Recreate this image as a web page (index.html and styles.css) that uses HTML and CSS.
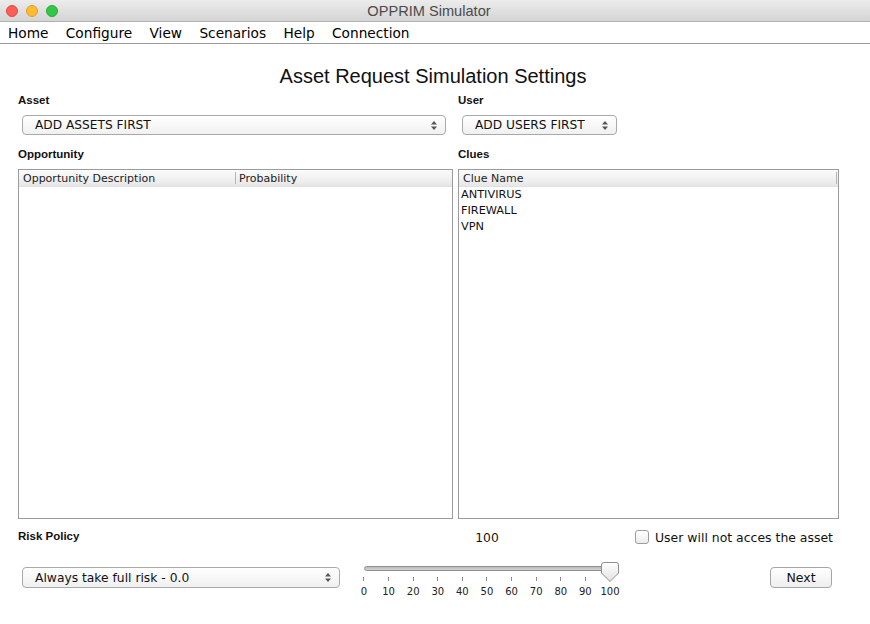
FILE: index.html
```html
<!DOCTYPE html>
<html>
<head>
<meta charset="utf-8">
<title>OPPRIM Simulator</title>
<link rel="stylesheet" href="styles.css">
</head>
<body>
<div class="window">
  <header class="titlebar">
    <div class="lights">
      <span class="light red"></span>
      <span class="light yellow"></span>
      <span class="light green"></span>
    </div>
    <div class="title">OPPRIM Simulator</div>
    <div></div>
  </header>
  <nav class="menubar">
    <span>Home</span>
    <span>Configure</span>
    <span>View</span>
    <span>Scenarios</span>
    <span>Help</span>
    <span>Connection</span>
  </nav>
  <main class="content">
    <h1 class="heading">Asset Request Simulation Settings</h1>
    <div class="columns">
      <section class="col">
        <div class="label">Asset</div>
        <div class="combo combo-asset">
          <span class="combo-text">ADD ASSETS FIRST</span>
          <svg class="arrows" width="6" height="9" viewBox="0 0 6 9"><path d="M3 0 L6 3.5 L0 3.5 Z M0 5.5 L6 5.5 L3 9 Z" fill="#555"/></svg>
        </div>
        <div class="label label-gap">Opportunity</div>
        <div class="table">
          <div class="thead">
            <div class="th th-desc">Opportunity Description</div>
            <div class="th-sep"></div>
            <div class="th th-prob">Probability</div>
          </div>
        </div>
      </section>
      <section class="col">
        <div class="label">User</div>
        <div class="combo combo-user">
          <span class="combo-text">ADD USERS FIRST</span>
          <svg class="arrows" width="6" height="9" viewBox="0 0 6 9"><path d="M3 0 L6 3.5 L0 3.5 Z M0 5.5 L6 5.5 L3 9 Z" fill="#555"/></svg>
        </div>
        <div class="label label-gap">Clues</div>
        <div class="table">
          <div class="thead">
            <div class="th th-clue">Clue Name</div>
            <div class="th-sep"></div>
          </div>
          <div class="row">ANTIVIRUS</div>
          <div class="row">FIREWALL</div>
          <div class="row">VPN</div>
        </div>
      </section>
    </div>
    <div class="bottom">
      <div class="label risk-label">Risk Policy</div>
      <div class="value">100</div>
      <label class="check">
        <span class="checkbox"></span>
        <span class="check-text">User will not acces the asset</span>
      </label>

      <div class="combo combo-risk">
        <span class="combo-text">Always take full risk - 0.0</span>
        <svg class="arrows" width="6" height="9" viewBox="0 0 6 9"><path d="M3 0 L6 3.5 L0 3.5 Z M0 5.5 L6 5.5 L3 9 Z" fill="#555"/></svg>
      </div>
      <div class="slider">
        <div class="track-wrap">
          <div class="track"></div>
          <svg class="thumb" width="18" height="20" viewBox="0 0 18 20">
            <defs>
              <linearGradient id="tg" x1="0" y1="0" x2="0" y2="1">
                <stop offset="0" stop-color="#ffffff"/>
                <stop offset="1" stop-color="#e2e2e2"/>
              </linearGradient>
            </defs>
            <path d="M3 0.5 H15 Q17.5 0.5 17.5 3 V11 L9 19.5 L0.5 11 V3 Q0.5 0.5 3 0.5 Z" fill="url(#tg)" stroke="#8e8e8e" stroke-width="1"/>
          </svg>
        </div>
        <div class="ticks">
          <span></span><span></span><span></span><span></span><span></span><span></span><span></span><span></span><span></span><span></span><span></span>
        </div>
        <div class="scale">
          <span>0</span><span>10</span><span>20</span><span>30</span><span>40</span><span>50</span><span>60</span><span>70</span><span>80</span><span>90</span><span>100</span>
        </div>
      </div>
      <button class="btn">Next</button>
    </div>
  </main>
</div>
</body>
</html>
```

FILE: styles.css
```css
* { box-sizing: border-box; }

html, body {
  margin: 0;
  padding: 0;
}

body {
  width: 870px;
  height: 624px;
  overflow: hidden;
  background: #ffffff;
  font-family: "DejaVu Sans", sans-serif;
  color: #000;
}

.window {
  width: 870px;
  height: 624px;
}

/* Title bar */
.titlebar {
  height: 22px;
  display: grid;
  grid-template-columns: 1fr auto 1fr;
  align-items: center;
  background: linear-gradient(#ececec, #d4d4d4);
  border-bottom: 1px solid #b2b2b2;
}

.lights {
  display: flex;
  gap: 8px;
  padding-left: 6px;
}

.light {
  width: 12px;
  height: 12px;
  border-radius: 50%;
}

.red { background: #fc5f57; border: 1px solid #df4a42; }
.yellow { background: #fdbc2e; border: 1px solid #dea133; }
.green { background: #33c748; border: 1px solid #27aa35; }

.title {
  font-family: "Liberation Sans", Arial, sans-serif;
  font-size: 14.6px;
  color: #4b4b4b;
  margin-right: 12px;
}

/* Menu bar */
.menubar {
  height: 22px;
  display: flex;
  align-items: center;
  gap: 17.4px;
  padding: 1px 0 0 8px;
  font-size: 13.7px;
  border-bottom: 1px solid #9a9a9a;
}

/* Content */
.heading {
  margin: 20px 0 0;
  padding-right: 4px;
  font-family: "Liberation Sans", Arial, sans-serif;
  font-weight: normal;
  font-size: 20px;
  line-height: 24px;
  height: 24px;
  text-align: center;
  color: #111;
}

.columns {
  display: grid;
  grid-template-columns: 435px 381px;
  column-gap: 5px;
  padding-left: 18px;
  margin-top: 5px;
}

.col {
  display: flex;
  flex-direction: column;
}

.label {
  font-family: "Liberation Sans", Arial, sans-serif;
  font-weight: bold;
  font-size: 11.5px;
  line-height: 14px;
  height: 14px;
  color: #111;
}

.label-gap {
  margin-top: 12px;
}

.combo {
  display: flex;
  align-items: center;
  justify-content: space-between;
  height: 20px;
  margin-top: 8px;
  margin-left: 4px;
  padding: 0 8px 0 12px;
  border: 1px solid #a9a9a9;
  border-radius: 4px;
  background: linear-gradient(#ffffff, #f0f0f0);
  font-size: 12.2px;
  color: #111;
}

.combo-asset { width: 424px; }
.combo-user { width: 155px; }

.arrows {
  flex: none;
}

.table {
  margin-top: 8px;
  height: 350px;
  border: 1px solid #9b9b9b;
  background: #fff;
  font-size: 11px;
}

.thead {
  display: flex;
  align-items: center;
  height: 17px;
  background: linear-gradient(#fbfbfb 0%, #f2f2f2 50%, #e6e6e6 100%);
  border-bottom: 1px solid #e0e0e0;
  color: #222;
}

.th {
  padding-left: 4px;
  line-height: 15px;
}

.th-desc { width: 216px; }
.th-clue { width: 377px; }
.th-prob { padding-left: 3px; }

.th-sep {
  width: 1px;
  height: 12px;
  background: #b5b5b5;
}

.row {
  height: 16px;
  line-height: 16px;
  padding-left: 2px;
  font-size: 11.3px;
  color: #111;
}

/* Bottom controls */
.bottom {
  display: grid;
  grid-template-columns: 328px 282px 210px;
  grid-template-rows: 14px auto;
  row-gap: 19px;
  padding-left: 18px;
  margin-top: 10px;
}

.risk-label {
  align-self: center;
}

.value {
  text-align: center;
  font-size: 12.3px;
  line-height: 14px;
  color: #111;
  padding-top: 2px;
}

.check {
  display: flex;
  align-items: center;
  gap: 6px;
  padding-left: 7px;
  padding-top: 2px;
}

.checkbox {
  width: 14px;
  height: 14px;
  border: 1px solid #9d9d9d;
  border-radius: 3px;
  background: linear-gradient(#ffffff, #ececec);
}

.check-text {
  font-size: 12.45px;
  color: #111;
}

.combo-risk {
  width: 318px;
  height: 21px;
  margin-top: 5px;
  font-size: 12.3px;
}

.slider {
  margin-left: 5.7px;
  width: 270.6px;
}

.track-wrap {
  position: relative;
  height: 15px;
  padding: 4px 10px 0 12.3px;
}

.track {
  height: 5px;
  border-radius: 3px;
  border: 1px solid #8f8f8f;
  background: linear-gradient(#b9b9b9, #d4d4d4);
}

.thumb {
  position: absolute;
  left: 249px;
  top: 0;
}

.ticks {
  display: grid;
  grid-template-columns: repeat(11, 1fr);
  height: 4px;
}

.ticks span {
  justify-self: center;
  width: 1px;
  height: 4px;
  background: #8a8a8a;
}

.scale {
  display: grid;
  grid-template-columns: repeat(11, 1fr);
  margin-top: 5px;
  font-size: 10px;
  line-height: 12px;
  color: #222;
}

.scale span {
  text-align: center;
}

.btn {
  justify-self: end;
  align-self: start;
  width: 62px;
  height: 21px;
  margin-top: 5px;
  margin-right: 6px;
  padding: 0;
  border: 1px solid #a5a5a5;
  border-radius: 4px;
  background: linear-gradient(#ffffff, #eeeeee);
  font-family: "DejaVu Sans", sans-serif;
  font-size: 12.5px;
  color: #111;
}
```
